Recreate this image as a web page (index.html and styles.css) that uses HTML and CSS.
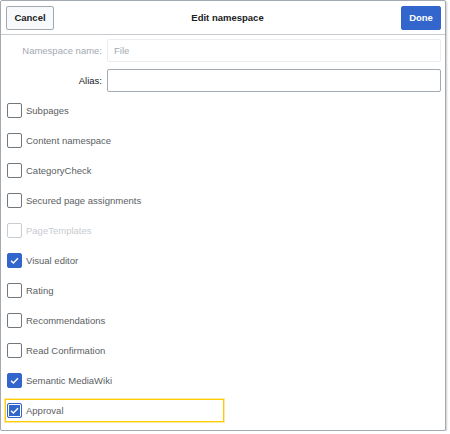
FILE: index.html
```html
<!DOCTYPE html>
<html>
<head>
<meta charset="utf-8">
<link rel="stylesheet" href="styles.css">
</head>
<body>
<div class="dialog">
  <div class="head">
    <button class="btn cancel">Cancel</button>
    <div class="title">Edit namespace</div>
    <button class="btn done">Done</button>
  </div>
  <div class="body">
    <div class="field disabled">
      <label>Namespace name:</label>
      <div class="input">File</div>
    </div>
    <div class="field">
      <label>Alias:</label>
      <div class="input"></div>
    </div>
    <div class="checks">
      <div class="row"><span class="box"></span><span>Subpages</span></div>
      <div class="row"><span class="box"></span><span>Content namespace</span></div>
      <div class="row"><span class="box"></span><span>CategoryCheck</span></div>
      <div class="row"><span class="box"></span><span>Secured page assignments</span></div>
      <div class="row off"><span class="box"></span><span>PageTemplates</span></div>
      <div class="row on"><span class="box"><svg viewBox="0 0 15 15"><path d="M3.5 7.8 L6.2 10.4 L11.5 4.8" /></svg></span><span>Visual editor</span></div>
      <div class="row"><span class="box"></span><span>Rating</span></div>
      <div class="row"><span class="box"></span><span>Recommendations</span></div>
      <div class="row"><span class="box"></span><span>Read Confirmation</span></div>
      <div class="row on"><span class="box"><svg viewBox="0 0 15 15"><path d="M3.5 7.8 L6.2 10.4 L11.5 4.8" /></svg></span><span>Semantic MediaWiki</span></div>
      <div class="row on focus"><span class="box"><svg viewBox="0 0 15 15"><path d="M3.5 7.8 L6.2 10.4 L11.5 4.8" /></svg></span><span>Approval</span></div>
    </div>
  </div>
</div>
</body>
</html>
```
FILE: styles.css
```css
html, body {
  margin: 0;
  padding: 0;
  background: #fff;
}
body {
  font-family: "Liberation Sans", Arial, sans-serif;
  font-size: 9.5px;
  color: #5a5e63;
}
.dialog {
  width: 446px;
  height: 431px;
  border: 1px solid #a2a9b1;
  border-radius: 2px;
  box-shadow: 1px 1px 2px rgba(0,0,0,0.2);
  box-sizing: border-box;
  background: #fff;
}
.head {
  height: 34px;
  box-sizing: border-box;
  border-bottom: 1px solid #c8ccd1;
  display: flex;
  align-items: center;
  justify-content: space-between;
  padding: 0 4px 0 5px;
}
.btn {
  font-family: inherit;
  font-size: 9.5px;
  font-weight: bold;
  height: 24px;
  border-radius: 2px;
  padding: 0 7px;
  cursor: pointer;
}
.cancel {
  width: 48px;
  background: #f8f9fa;
  border: 1px solid #a2a9b1;
  color: #202122;
}
.done {
  width: 40px;
  background: #36c;
  border: 1px solid #36c;
  color: #fff;
}
.title {
  font-weight: bold;
  color: #202122;
  font-size: 9.5px;
}
.body {
  padding: 4px 4px 0 4px;
}
.field {
  display: flex;
  align-items: center;
  gap: 5px;
  margin-bottom: 7px;
}
.field label {
  width: 97px;
  text-align: right;
  color: #202122;
}
.field .input {
  flex: 1;
  height: 23px;
  box-sizing: border-box;
  border: 1px solid #a2a9b1;
  border-radius: 2px;
  padding: 0 6px;
  display: flex;
  align-items: center;
  color: #202122;
}
.field.disabled label {
  color: #a2a9b1;
}
.field.disabled .input {
  border-color: #eaecf0;
  color: #a2a9b1;
}
.checks {
  display: flex;
  flex-direction: column;
  margin-top: -4px;
}
.row {
  height: 30px;
  display: flex;
  align-items: center;
  gap: 4px;
  padding-left: 2px;
  box-sizing: border-box;
  width: 219px;
}
.box {
  width: 15px;
  height: 15px;
  box-sizing: border-box;
  border: 1px solid #72777d;
  border-radius: 2px;
  background: #fff;
  display: flex;
  flex: none;
}
.box svg {
  width: 13px;
  height: 13px;
}
.box path {
  fill: none;
  stroke: #fff;
  stroke-width: 1.6;
}
.row.off {
  color: #c8ccd1;
}
.row.off .box {
  border-color: #c8ccd1;
}
.row.on .box {
  background: #36c;
  border-color: #36c;
}
.row.focus {
  height: 23px;
  margin: 4px 0 3px 0;
  border: 1px solid #ffcc00;
  box-shadow: 0 0 0 1px rgba(255, 214, 90, 0.55);
  padding-left: 1px;
}
.row.focus .box {
  box-shadow: inset 0 0 0 1px #fff;
}
```
